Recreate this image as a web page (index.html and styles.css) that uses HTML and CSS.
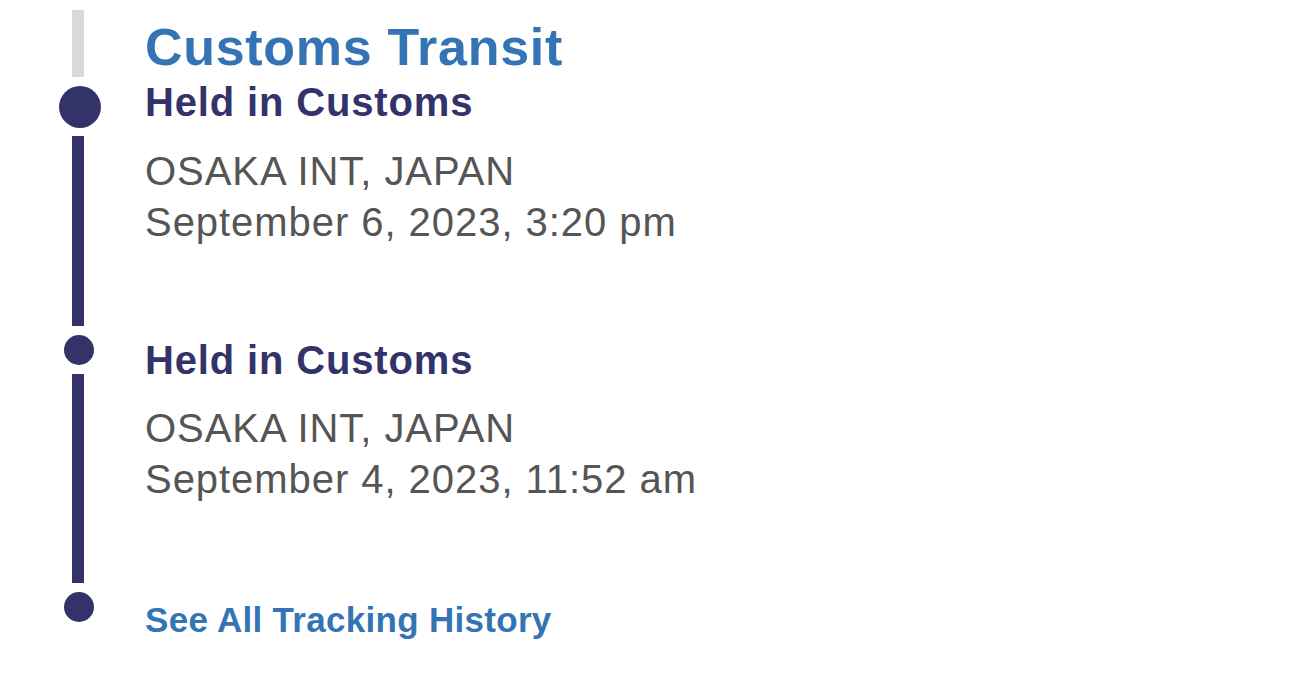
FILE: index.html
```html
<!DOCTYPE html>
<html lang="en">
<head>
<meta charset="utf-8">
<title>Tracking</title>
<link rel="stylesheet" href="styles.css">
</head>
<body>
<div class="timeline">
  <div class="row row-header">
    <div class="rail"><span class="line line-muted"></span></div>
    <div class="content">
      <h1 class="title">Customs Transit</h1>
    </div>
  </div>
  <div class="row row-current">
    <div class="rail">
      <span class="dot dot-large"></span>
      <span class="line"></span>
    </div>
    <div class="content">
      <h2 class="event">Held in Customs</h2>
      <p class="detail">OSAKA INT, JAPAN</p>
      <p class="detail">September 6, 2023, 3:20 pm</p>
    </div>
  </div>
  <div class="row row-past">
    <div class="rail">
      <span class="dot"></span>
      <span class="line"></span>
    </div>
    <div class="content">
      <h2 class="event">Held in Customs</h2>
      <p class="detail">OSAKA INT, JAPAN</p>
      <p class="detail">September 4, 2023, 11:52 am</p>
    </div>
  </div>
  <div class="row row-end">
    <div class="rail">
      <span class="dot"></span>
    </div>
    <div class="content">
      <a class="history-link" href="#">See All Tracking History</a>
    </div>
  </div>
</div>
</body>
</html>
```

FILE: styles.css
```css
* { box-sizing: border-box; }

html, body {
  margin: 0;
  padding: 0;
  background: #ffffff;
}

body {
  font-family: "Liberation Sans", Arial, Helvetica, sans-serif;
  color: #555555;
}

.timeline {
  padding-top: 10px;
}

.row {
  display: flex;
  align-items: stretch;
}

.rail {
  flex: 0 0 145px;
  min-width: 0;
  box-sizing: border-box;
  padding-left: 56px;
  padding-right: 45px;
  display: flex;
  flex-direction: column;
  align-items: center;
}

.line {
  display: block;
  width: 12px;
  flex: 1 1 auto;
  background: #33336a;
}

.line-muted {
  background: #d9d9d9;
}

.dot {
  display: block;
  flex: 0 0 auto;
  width: 30px;
  height: 30px;
  border-radius: 50%;
  background: #33336a;
  margin-top: 9px;
  margin-bottom: 9px;
  margin-left: 2px;
}

.dot-large {
  width: 42px;
  height: 42px;
  margin-bottom: 8px;
  margin-left: 4px;
}

.content {
  flex: 1 1 auto;
}

.title {
  margin: 0;
  padding-top: 7px;
  font-size: 52px;
  line-height: 60px;
  font-weight: 700;
  letter-spacing: 0.7px;
  color: #3574b4;
}

.event {
  margin: 0;
  font-size: 40px;
  line-height: 50px;
  font-weight: 700;
  letter-spacing: 0.85px;
  color: #33336a;
}

.event + .detail {
  margin-top: 18.5px;
}

.detail {
  margin: 0;
  font-size: 40px;
  line-height: 51px;
  letter-spacing: 0.95px;
  color: #555555;
}

.row-current .content {
  padding-bottom: 78px;
}

.row-past .content {
  padding-top: 9px;
  padding-bottom: 78px;
}

.row-end .content {
  padding-top: 17px;
}

.history-link {
  display: inline-block;
  font-size: 35px;
  line-height: 40px;
  font-weight: 700;
  letter-spacing: 0.3px;
  color: #3574b4;
  text-decoration: none;
}
```
